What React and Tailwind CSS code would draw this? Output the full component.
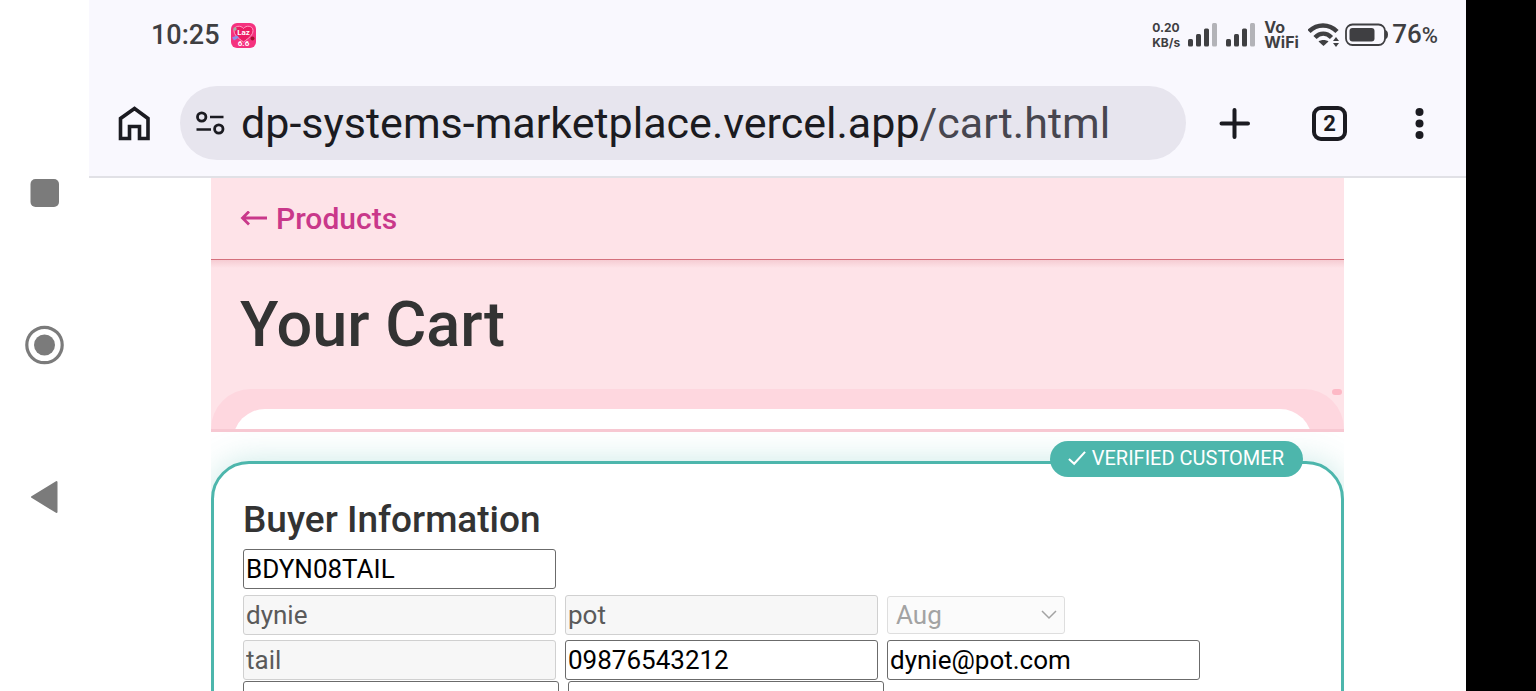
import React, { useState } from 'react';

function SystemNav() {
  return (
    <nav className="w-[89px] shrink-0 pb-0.5 bg-white flex flex-col items-center justify-center gap-28">
      <button aria-label="Recent apps" className="size-10">
        <svg viewBox="0 0 40 40" fill="#7b7b7b">
          <rect x="5.500" y="6" width="28.500" height="28" rx="5" />
        </svg>
      </button>
      <button aria-label="Home screen" className="size-10">
        <svg viewBox="0 0 40 40" fill="#7b7b7b">
          <circle cx="19.500" cy="20" r="17.700" fill="none" stroke="#7b7b7b" strokeWidth="3.200" />
          <circle cx="19.500" cy="20" r="10.500" />
        </svg>
      </button>
      <button aria-label="Back" className="size-10">
        <svg viewBox="0 0 40 40" fill="#7b7b7b" stroke="#7b7b7b" strokeWidth="2" strokeLinejoin="round">
          <path d="M7 20 31.500 5V35Z" />
        </svg>
      </button>
    </nav>
  );
}

function SignalBars() {
  return (
    <svg className="w-[29px] h-6" viewBox="0 0 29 24" fill="#3f3f42">
      <rect x="0" y="16" width="5" height="7.500" rx="1.500" />
      <rect x="8" y="11" width="5" height="12.500" rx="1.500" />
      <rect x="16" y="5.500" width="5" height="18" rx="1.500" />
      <rect x="24" y="0" width="5" height="23.500" rx="1.500" fill="#b3b3b8" />
    </svg>
  );
}

function StatusBar() {
  return (
    <div className="h-[70px] pl-[62px] pr-7 flex items-center justify-between text-[#3f3f42]">
      <div className="flex items-center gap-[11px]">
        <span className="text-[27px] leading-8 font-medium">10:25</span>
        <svg className="size-[25px]" viewBox="0 0 25 25">
          <rect width="25" height="25" rx="6" fill="#f5327f" />
          <path d="M12.500 19C7 15 3 12 3 7.500 3 2.500 10 2 12.500 5.500 15 2 22 2.500 22 7.500 22 12 18 15 12.500 19Z" fill="#ec1c64" stroke="#ff9fc4" strokeWidth="1" />
          <path d="M1 14.500l5-2 2 2-5 3Z" fill="#8f8fe8" />
          <circle cx="21.500" cy="15.500" r="2" fill="#a3122f" />
          <circle cx="4" cy="6" r="1.700" fill="#9fb4a4" />
          <text x="12.500" y="12" fontSize="8" fontWeight="700" textAnchor="middle" fill="#fff">Laz</text>
          <text x="12.500" y="23" fontSize="8" fontWeight="700" textAnchor="middle" fill="#fff">6.6</text>
        </svg>
      </div>

      <div className="flex items-center">
        <div className="w-9 font-['Inter',sans-serif] text-[12px] leading-[15px] font-bold">
          <div>0.20</div>
          <div>KB/s</div>
        </div>
        <SignalBars />
        <div className="w-[9px]" />
        <SignalBars />
        <div className="ml-[9px] w-11 font-['Inter',sans-serif] text-[16px] leading-[15px] font-bold">
          <div>Vo</div>
          <div>WiFi</div>
        </div>
        <svg className="w-8 h-6" viewBox="0 0 32 24" fill="none" stroke="#3f3f42">
          <path d="M1 8.500C9 .5 21 .5 29 8.500" strokeWidth="4.500" />
          <path d="M7 14.500C12 9.500 18.500 9.500 23.500 14.500" strokeWidth="4.500" />
          <path d="M10.500 18.500C13 16.500 18 16.500 20.500 18.500L15.500 23Z" fill="#3f3f42" stroke="none" />
          <path d="M28 14 31 18H25ZM28 24 25 20H31Z" fill="#3f3f42" stroke="none" />
        </svg>
        <svg className="ml-[5px] w-11 h-6" viewBox="0 0 44 24">
          <rect x="1" y="1.500" width="39" height="20.500" rx="6.500" fill="none" stroke="#3f3f42" strokeWidth="1.800" />
          <rect x="4.500" y="5" width="25" height="13.500" rx="3" fill="#3f3f42" />
          <path d="M40 7c2 .5 3 2 3 4.500s-1 4.500-3 5Z" fill="#3f3f42" />
        </svg>
        <span className="ml-[3px] text-[26px] leading-8 font-medium">
          76<span className="text-[22px]">%</span>
        </span>
      </div>
    </div>
  );
}

function BrowserBar() {
  return (
    <div className="h-[106px] pt-4 pl-[25px] pr-[27px] flex items-start text-[#1b1b21]">
      <button aria-label="Home" className="w-[66px] h-[74px] flex items-center">
        <svg className="size-10" viewBox="0 0 40 40" fill="none" stroke="#1b1b21" strokeWidth="3.600">
          <path d="M6.500 35.500V15.500L20.500 5.500 34 15.500V35.500H25.500V23.500H15.500V35.500Z" />
        </svg>
      </button>
      <div className="flex-1 min-w-0 h-[74px] pl-4 rounded-full bg-[#e7e5ee] flex items-center">
        <button aria-label="Site information">
          <svg className="w-[29px] h-7" viewBox="0 0 29 28" fill="none" stroke="#1b1b21" strokeWidth="2.800">
            <circle cx="5.700" cy="8" r="4.200" />
            <path d="M14 8H27.500M.5 20.500H15" strokeWidth="2.500" />
            <circle cx="22.800" cy="20" r="4.200" />
          </svg>
        </button>
        <a href="#cart" className="ml-4 text-[43px] leading-[56px] whitespace-nowrap">
          dp-systems-marketplace.vercel.app<span className="text-[#47464f]">/cart.html</span>
        </a>
      </div>
      <button aria-label="New tab" className="ml-7 size-10 mt-[17px]">
        <svg viewBox="0 0 40 40" stroke="#1b1b21" strokeWidth="4" strokeLinecap="round">
          <path d="M7.500 20.500H34M20.500 7V34" />
        </svg>
      </button>
      <button aria-label="Switch tabs" className="ml-[58px] mt-5 w-[35px] h-[35px] rounded-[9px] border-4 border-[#1b1b21] text-[22px] leading-[26px] font-bold">
        2
      </button>
      <button aria-label="More options" className="ml-[52px] mt-[17px] size-10">
        <svg viewBox="0 0 40 40" fill="#1b1b21">
          <circle cx="20.500" cy="9" r="4" />
          <circle cx="20.500" cy="20.500" r="4" />
          <circle cx="20.500" cy="32" r="4" />
        </svg>
      </button>
    </div>
  );
}

const fieldClass =
  'w-[313px] h-10 px-[2px] rounded-[3px] border border-[#6b6b6b] bg-white text-[26px] leading-8 text-black disabled:border-[#d0d0d0] disabled:bg-[#f7f7f7] disabled:text-[#5a5a5a]';

function BuyerForm() {
  const [buyer, setBuyer] = useState({
    code: 'BDYN08TAIL',
    phone: '09876543212',
    email: 'dynie@pot.com'
  });

  const handleChange = (e) => {
    const { name, value } = e.target;
    setBuyer(prev => ({ ...prev, [name]: value }));
  };

  return (
    <form className="relative pt-8 pb-10 pl-[29px] border-[3px] border-[#4db6ac] rounded-[38px] bg-white shadow-[0_0_32px_rgba(77,182,172,0.3)]">
      <div className="absolute -top-[23px] right-[38px] h-9 pl-[18px] pr-[19px] rounded-full bg-[#4db6ac] text-white text-[20px] leading-[34px] flex items-start gap-[6px]">
        <svg className="mt-[9px] w-[18px] h-4" viewBox="0 0 19 16" fill="none" stroke="#fff" strokeWidth="2.200">
          <path d="M1 9 6.500 14 18 1.500" />
        </svg>
        VERIFIED CUSTOMER
      </div>

      <h2 className="text-[37px] leading-[48px] font-medium text-[#333]">Buyer Information</h2>
      <div className="mt-[5px] flex">
        <input aria-label="Buyer code" name="code" value={buyer.code} onChange={handleChange} className={fieldClass} />
      </div>
      <div className="mt-[6px] flex items-center gap-[9px]">
        <input aria-label="First name" value="dynie" disabled className={fieldClass} />
        <input aria-label="Last name" value="pot" disabled className={fieldClass} />
        <div className="relative">
          <select aria-label="Birth month" defaultValue="Aug" disabled className="block w-[178px] h-[38px] pl-2 appearance-none rounded-[3px] border border-[#dedede] bg-[#fbfbfb] text-[26px] leading-8 text-[#a3a3a3]">
            <option>Aug</option>
          </select>
          <svg className="absolute right-2 top-3 w-4 h-3" viewBox="0 0 16 12" fill="none" stroke="#a3a3a3" strokeWidth="1.500">
            <path d="M1 3 8 10 15 3" />
          </svg>
        </div>
      </div>
      <div className="mt-[5px] flex gap-[9px]">
        <input aria-label="Middle name" value="tail" disabled className={fieldClass} />
        <input aria-label="Phone" name="phone" value={buyer.phone} onChange={handleChange} className={fieldClass} />
        <input aria-label="Email" name="email" value={buyer.email} onChange={handleChange} className={fieldClass} />
      </div>
      <div className="mt-px flex gap-[9px]">
        <textarea aria-label="Address" className="w-[316px] h-20 rounded-[3px] border border-[#6b6b6b] resize-none" />
        <textarea aria-label="Notes" className="w-[316px] h-20 rounded-[3px] border border-[#6b6b6b] resize-none" />
      </div>
    </form>
  );
}

function CartPage() {
  return (
    <main className="mx-[122px] overflow-hidden">
      <div className="h-[82px] pl-[29px] flex items-center border-b border-b-[#d4707c] bg-[#fee3e8]">
        <a href="#products" className="flex items-center gap-2 text-[30px] leading-8 font-medium text-[#c9388a]">
          <svg className="w-7 h-4" viewBox="0 0 28 16" fill="none" stroke="#c9388a" strokeWidth="2.800">
            <path d="M27 7H2M9 .5 2.500 7 9 13.500" />
          </svg>
          Products
        </a>
      </div>

      <section className="relative z-10 bg-[#fee3e8] border-b-[3px] border-[#f7c8d2] overflow-hidden">
        <div className="absolute inset-x-0 top-0 h-2 bg-linear-to-b from-[#d4707c]/20 to-transparent" />
        <h1 className="h-[129px] pl-[29px] text-[63px] leading-[129px] font-medium text-[#333]">Your Cart</h1>
        <div className="h-10 pl-[22px] pr-[32px] pt-5 rounded-t-[40px] bg-[#fed7df] overflow-hidden">
          <div className="h-12 rounded-t-[32px] bg-white" />
        </div>
        <div className="absolute right-[2px] top-[129px] w-[10px] h-[6px] rounded-full bg-[#fdb9c6]" />
      </section>

      <div className="pt-[29px]">
        <BuyerForm />
      </div>
    </main>
  );
}

function App() {
  return (
    <div className="flex h-screen overflow-hidden bg-white font-['Roboto',sans-serif]">
      <SystemNav />
      <div className="flex-1 min-w-0 overflow-hidden">
        <header className="bg-[#f9f8fe] border-b-2 border-[#e1e1e6]">
          <StatusBar />
          <BrowserBar />
        </header>
        <CartPage />
      </div>
      <div className="w-[70px] shrink-0 bg-black" />
    </div>
  );
}

export default App;
